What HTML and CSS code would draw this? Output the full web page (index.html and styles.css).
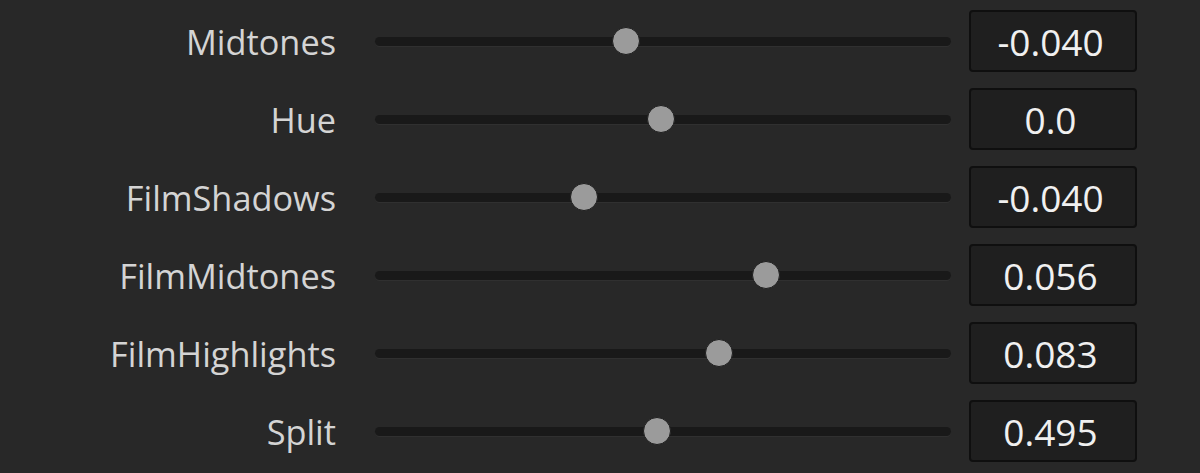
FILE: index.html
```html
<!DOCTYPE html>
<html lang="en">
<head>
    <meta charset="UTF-8">
    <title>Film Look Controls</title>
    <link rel="stylesheet" href="styles.css">
</head>
<body>
    <div class="panel">
        <div class="param-row">
            <span class="param-label">Midtones</span>
            <div class="slider"><div class="track"></div><div class="thumb" style="left: 43.5%"></div></div>
            <div class="value-box">-0.040</div>
        </div>
        <div class="param-row">
            <span class="param-label">Hue</span>
            <div class="slider"><div class="track"></div><div class="thumb" style="left: 49.7%"></div></div>
            <div class="value-box">0.0</div>
        </div>
        <div class="param-row">
            <span class="param-label">FilmShadows</span>
            <div class="slider"><div class="track"></div><div class="thumb" style="left: 36.3%"></div></div>
            <div class="value-box">-0.040</div>
        </div>
        <div class="param-row">
            <span class="param-label">FilmMidtones</span>
            <div class="slider"><div class="track"></div><div class="thumb" style="left: 67.8%"></div></div>
            <div class="value-box">0.056</div>
        </div>
        <div class="param-row">
            <span class="param-label">FilmHighlights</span>
            <div class="slider"><div class="track"></div><div class="thumb" style="left: 59.7%"></div></div>
            <div class="value-box">0.083</div>
        </div>
        <div class="param-row">
            <span class="param-label">Split</span>
            <div class="slider"><div class="track"></div><div class="thumb" style="left: 48.9%"></div></div>
            <div class="value-box">0.495</div>
        </div>
    </div>
</body>
</html>
```

FILE: styles.css
```css
html, body {
    margin: 0;
    background: #282828;
}
body {
    font-family: "Open Sans", "Noto Sans", sans-serif;
    overflow: hidden;
}
.panel {
    padding-top: 2px;
}
.param-row {
    display: flex;
    align-items: center;
    height: 78px;
}
.param-label {
    width: 336px;
    text-align: right;
    font-size: 34.3px;
    color: #d4d4d4;
}
.slider {
    position: relative;
    width: 576px;
    height: 30px;
    margin-left: 39px;
    display: flex;
    align-items: center;
}
.track {
    width: 100%;
    height: 9px;
    border-radius: 5px;
    background: #191919;
    box-shadow: 0 1px 0 #303030;
}
.thumb {
    position: absolute;
    top: 1px;
    width: 26px;
    height: 26px;
    margin-left: -14px;
    border-radius: 50%;
    background: #9b9b9b;
    border: 1px solid #1e1e1e;
}
.value-box {
    box-sizing: border-box;
    width: 168px;
    height: 62px;
    margin-left: 18px;
    padding-right: 5px;
    background: #1f1f1f;
    border: 2px solid #0f0f0f;
    border-radius: 4px;
    color: #f0f0f0;
    font-size: 37px;
    display: flex;
    align-items: center;
    justify-content: center;
}
```
